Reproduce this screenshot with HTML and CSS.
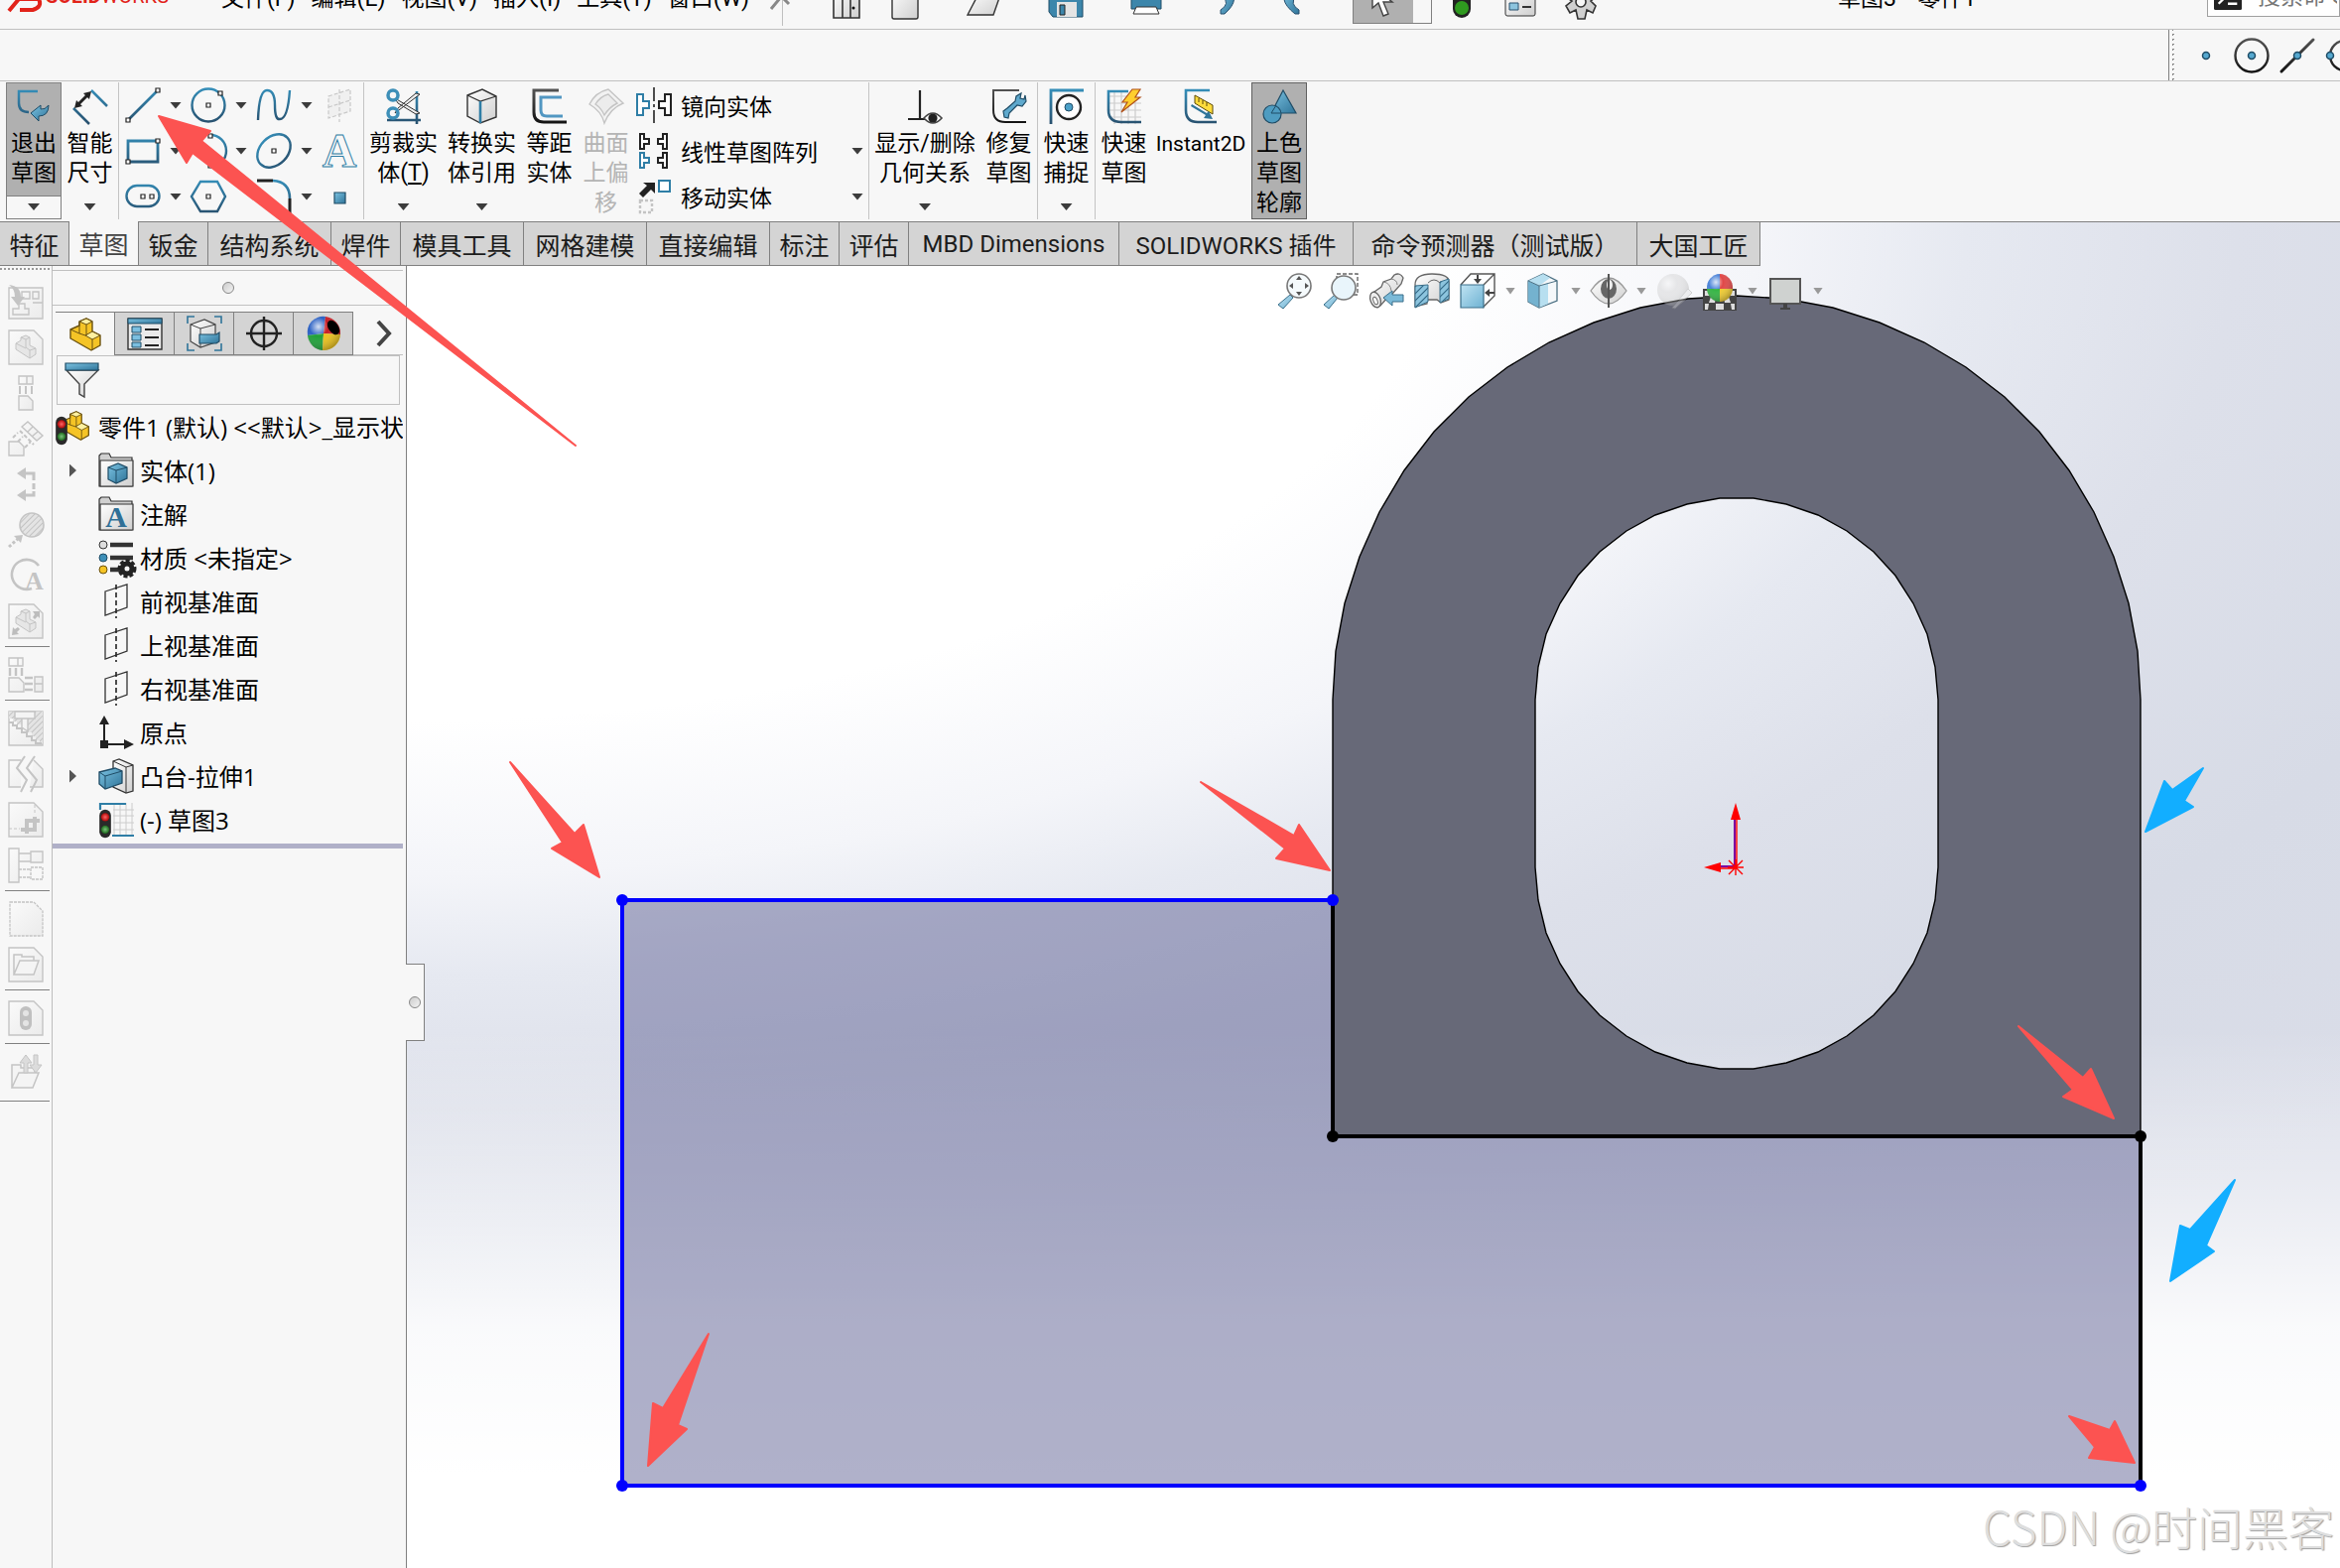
FILE: index.html
```
<!DOCTYPE html>
<html lang="zh-CN">
<head>
  <meta charset="UTF-8">
  <title>草图3 - 零件1</title>
  <link rel="stylesheet" href="styles.css">
</head>
<body>
  <!-- shared gradients and symbols -->
  <svg class="defs" aria-hidden="true">
    <defs>
      <linearGradient id="blue" gradientUnits="userSpaceOnUse" x1="0" y1="0" x2="0" y2="36"><stop offset="0" stop-color="#3590bb"/><stop offset="1" stop-color="#28506e"/></linearGradient>
      <linearGradient id="blueFill" x1="0" y1="0" x2="1" y2="1"><stop offset="0" stop-color="#7cc3e2"/><stop offset="1" stop-color="#2f7499"/></linearGradient>
      <linearGradient id="sky" x1="0" y1="0" x2="1" y2="1"><stop offset="0" stop-color="#bfe3f3"/><stop offset="1" stop-color="#6fb2d2"/></linearGradient>
      <linearGradient id="grey" x1="0" y1="0" x2="1" y2="1"><stop offset="0" stop-color="#ffffff"/><stop offset="1" stop-color="#cfcfcf"/></linearGradient>
      <linearGradient id="pale" x1="0" y1="0" x2="1" y2="1"><stop offset="0" stop-color="#fafafa"/><stop offset="1" stop-color="#ebebeb"/></linearGradient>
      <linearGradient id="dark" gradientUnits="userSpaceOnUse" x1="0" y1="0" x2="0" y2="36"><stop offset="0" stop-color="#555"/><stop offset="1" stop-color="#111"/></linearGradient>
      <radialGradient id="shine" cx=".35" cy=".3" r=".8"><stop offset="0" stop-color="#fff" stop-opacity=".8"/><stop offset=".35" stop-color="#fff" stop-opacity="0"/><stop offset="1" stop-color="#000" stop-opacity=".35"/></radialGradient>
      <radialGradient id="red"><stop offset="0" stop-color="#f66"/><stop offset="1" stop-color="#b00808"/></radialGradient>
      <radialGradient id="green"><stop offset="0" stop-color="#7cc27c"/><stop offset="1" stop-color="#1c6a1c"/></radialGradient>
      <pattern id="hatch" width="5" height="5" patternUnits="userSpaceOnUse" patternTransform="rotate(45)"><rect width="5" height="5" fill="#8cc4de"/><path d="M0 0v5" stroke="#2d6482" stroke-width="2"/></pattern>
      <pattern id="hatchGrey" width="4" height="4" patternUnits="userSpaceOnUse" patternTransform="rotate(45)"><rect width="4" height="4" fill="#e4e4e4"/><path d="M0 0v4" stroke="#c4c4c4" stroke-width="2"/></pattern>
    </defs>
    <symbol id="part" viewBox="0 0 36 36">
      <path d="M3 13l9-4V5l7-3 6 3v10l8 4v10l-9 5L3 22z" fill="#f5c426" stroke="#6b5210" stroke-width="1.4" stroke-linejoin="round"/>
      <path d="M12 5l7-3 6 3-6 3zM18 19l7-4 8 4-8 4z" fill="#fdf0a0" stroke="#6b5210"/>
      <path d="M19 8v11M25 23v11M3 13l9 4 6 2M12 5v12" fill="none" stroke="#6b5210"/>
    </symbol>
    <symbol id="partGrey" viewBox="0 0 36 36">
      <path d="M8 14l5-3V8l5-2 4 2v8l6 3v6l-6 4L8 20z" fill="#e6e6e6" stroke="#c4c4c4"/>
      <path d="M13 8l5 2 4-2M18 10v8l4 3v8M22 21l6-2M8 14l10 5" fill="none" stroke="#c4c4c4"/>
    </symbol>
    <symbol id="light" viewBox="0 0 14 36">
      <rect x="0" y="1" width="14" height="34" rx="7" fill="#2a2a2a"/>
      <circle cx="7" cy="10" r="5" fill="url(#red)"/><circle cx="7" cy="25" r="5" fill="url(#green)"/>
    </symbol>
    <symbol id="plane" viewBox="0 0 36 36">
      <path d="M7 8l22-7v23L7 32z" fill="none" stroke="#333" stroke-width="1.3"/>
      <path d="M18 1v34" stroke="#222" stroke-width="1.6" stroke-dasharray="5 3"/>
    </symbol>
    <symbol id="sheet" viewBox="0 0 36 36">
      <path d="M1 1h25l9 9v25H1z" fill="url(#pale)" stroke="#c4c4c4" stroke-width="1.4"/>
    </symbol>
    <symbol id="folder" viewBox="0 0 36 36">
      <path d="M1 34V3l2-2h8l2 4h21v29z" fill="#d0d0d0" stroke="#333" stroke-width="1.2"/>
      <path d="M2 8h33v26H2z" fill="url(#grey)" stroke="#333" stroke-width="1.2"/>
    </symbol>
  </svg>

  <header class="titlebar">
    <div class="titlebar-row">
      <div class="brand"><svg class="brand-mark" viewBox="0 0 36 36"><path d="M1 33l10-12h20q4 8-6 11H12" fill="none" stroke="#e2231a" stroke-width="4"/></svg><b>SOLID</b>WORKS</div>
      <nav class="menu">
        <button>文件(F)</button>
        <button>编辑(E)</button>
        <button>视图(V)</button>
        <button>插入(I)</button>
        <button>工具(T)</button>
        <button>窗口(W)</button>
        <button class="pin" aria-label="固定菜单"><svg viewBox="0 0 36 36"><path d="M6 31l10-12M12 14l12 12" stroke="#888" stroke-width="3"/></svg></button>
      </nav>
      <div class="quick">
        <button aria-label="欢迎"><svg viewBox="0 0 36 36"><path d="M5 2h26v32H5zM14 2v32M22 2v32" fill="url(#grey)" stroke="#333" stroke-width="1.6"/><circle cx="25" cy="24" r="1.5"/></svg></button>
        <button aria-label="新建"><svg viewBox="0 0 36 36"><rect x="5" y="1" width="26" height="34" rx="2" fill="url(#grey)" stroke="#333" stroke-width="1.4"/></svg></button>
        <button class="wide" aria-label="打开"><svg viewBox="0 0 36 36"><path d="M0 31L12 8h22L26 31z" fill="url(#grey)" stroke="#333" stroke-width="1.4"/></svg></button>
        <button class="wide" aria-label="保存"><svg viewBox="0 0 36 36"><path d="M1 2h34v31H5l-4-5z" fill="#3c86ab" stroke="#1f4c66"/><path d="M9 18h20v15H9z" fill="#e4e4e4"/><path d="M12 21h5v10h-5z" fill="#3c86ab" stroke="#222"/></svg></button>
        <button class="wide" aria-label="打印"><svg viewBox="0 0 36 36"><path d="M3 10h30v15H3z" fill="#3c86ab" stroke="#1f4c66"/><path d="M8 23h20l3 7H5z" fill="#fff" stroke="#333"/></svg></button>
        <button class="wide" aria-label="撤销"><svg viewBox="0 0 36 36"><path d="M18 4q16 10-2 26h-4v-4q10-6 2-14z" fill="url(#blueFill)" stroke="#28506e"/></svg></button>
        <button aria-label="重做"><svg viewBox="0 0 36 36"><path d="M16 4q-16 10 4 26h4v-4q-10-6-3-14z" fill="url(#blueFill)" stroke="#28506e"/></svg></button>
      </div>
      <button class="select-tool" aria-label="选择"><svg viewBox="0 0 36 36"><path d="M8 0v22l6-5 5 13 5-2-5-12h9z" fill="#fff" stroke="#444" stroke-width="1.4"/></svg></button>
      <div class="quick quick-end">
        <button aria-label="重建模型"><svg viewBox="0 0 36 36"><rect x="9" y="0" width="18" height="34" rx="9" fill="#222"/><circle cx="18" cy="24" r="7" fill="#2f9a1f"/></svg></button>
        <button aria-label="文件属性"><svg viewBox="0 0 36 36"><rect x="3" y="2" width="30" height="30" rx="2" fill="url(#grey)" stroke="#333"/><path d="M7 19h9v7H7z" fill="#8cc4de" stroke="#28506e"/><path d="M20 23h9" stroke="#333" stroke-width="2"/></svg></button>
        <button aria-label="选项"><svg viewBox="0 0 36 36"><path d="M14 2h8v7l6-3 5 7-5 4 5 5-3 7-6-3-2 9h-7l-2-9-6 3-4-7 6-5-6-4 5-7 6 3z" fill="#d0d0d0" stroke="#333" stroke-width="1.6"/><circle cx="18" cy="18" r="5" fill="#f7f7f7" stroke="#333" stroke-width="1.6"/></svg></button>
      </div>
      <div class="doc-title">草图3 * 零件1</div>
      <label class="search"><svg viewBox="0 0 36 36"><rect width="36" height="36" rx="2" fill="#222"/><path d="M6 16l6 6-6 6M18 20h12M18 28h12" fill="none" stroke="#fff" stroke-width="3"/></svg><input type="text" placeholder="搜索命令" aria-label="搜索命令"></label>
    </div>
  </header>

  <div class="snapbar">
    <div class="snaps">
      <button aria-label="点捕捉"><svg viewBox="0 0 36 36"><circle cx="18" cy="18" r="3.5" fill="#55a8cf" stroke="#1f4c66" stroke-width="1.5"/></svg></button>
      <button aria-label="圆心捕捉"><svg viewBox="0 0 36 36"><circle cx="18" cy="18" r="16.5" fill="none" stroke="url(#dark)" stroke-width="2.4"/><circle cx="18" cy="18" r="3.5" fill="#55a8cf" stroke="#1f4c66" stroke-width="1.5"/></svg></button>
      <button aria-label="中点捕捉"><svg viewBox="0 0 36 36"><path d="M2 34L34 2" stroke="url(#dark)" stroke-width="3" stroke-linecap="round"/><circle cx="18" cy="18" r="3.5" fill="#55a8cf" stroke="#1f4c66" stroke-width="1.5"/></svg></button>
      <button aria-label="象限点捕捉"><svg viewBox="0 0 36 36"><circle cx="20" cy="18" r="15" fill="none" stroke="url(#dark)" stroke-width="2.4"/><circle cx="5" cy="18" r="3.5" fill="#55a8cf" stroke="#1f4c66" stroke-width="1.5"/></svg></button>
    </div>
  </div>

  <section class="ribbon">
    <button class="tool tool-exit"><svg viewBox="0 0 36 36"><path d="M22 3H3v12q0 9 10 9" fill="none" stroke="url(#blue)" stroke-width="2.5"/><path d="M33 17q-4 5-8 4v-4l-10 8 8 8v-5q10 0 10-11z" fill="url(#blueFill)" stroke="#1f4c66"/></svg><span>退出<br>草图</span><i class="caret"></i></button>
    <button class="tool tool-md"><svg viewBox="0 0 36 36"><path d="M19 2l16 16M1 20l16 16" stroke="url(#blue)" stroke-width="2.5"/><path d="M5 17L16 6" stroke="#222" stroke-width="3"/><path d="M19 3l-2 8-6-6zM2 20l2-8 6 6z" fill="#222"/></svg><span>智能<br>尺寸</span><i class="caret"></i></button>

    <div class="sketch-grid">
      <div class="pair"><button aria-label="直线"><svg viewBox="0 0 36 36"><path d="M3 33L33 3" stroke="url(#blue)" stroke-width="2.6"/><path d="M1 31h4v4H1zM31 1h4v4h-4z" fill="#fff" stroke="#222" stroke-width="1.2"/></svg></button><i class="caret"></i></div>
      <div class="pair"><button aria-label="圆"><svg viewBox="0 0 36 36"><circle cx="18" cy="18" r="16.5" fill="none" stroke="url(#blue)" stroke-width="2.4"/><path d="M16 16h4v4h-4zM28 4h4v4h-4z" fill="#fff" stroke="#222" stroke-width="1.2"/></svg></button><i class="caret"></i></div>
      <div class="pair"><button aria-label="样条曲线"><svg viewBox="0 0 36 36"><path d="M2 33Q3 3 11 3t8 15 5 14Q32 32 34 3" fill="none" stroke="url(#blue)" stroke-width="2.4"/></svg></button><i class="caret"></i></div>
      <div class="pair"><button aria-label="草图平面"><svg viewBox="0 0 36 36"><path d="M7 9l22-7v22L7 31zM18 2v33M7 20l22-7" fill="#f0f0f0" stroke="#c8c8c8" stroke-width="1.2" stroke-dasharray="4 2"/></svg></button></div>

      <div class="pair"><button aria-label="矩形"><svg viewBox="0 0 36 36"><path d="M3 8h30v21H3z" fill="none" stroke="url(#blue)" stroke-width="2.8"/><path d="M31 6h4v4h-4zM1 27h4v4H1z" fill="#fff" stroke="#222" stroke-width="1.2"/></svg></button><i class="caret"></i></div>
      <div class="pair"><button aria-label="圆弧"><svg viewBox="0 0 36 36"><path d="M20 2a16 16 0 0 1 0 32" fill="none" stroke="url(#blue)" stroke-width="2.4"/><path d="M18 1h4v4h-4zM18 31h4v4h-4z" fill="#fff" stroke="#222" stroke-width="1.2"/></svg></button><i class="caret"></i></div>
      <div class="pair"><button aria-label="椭圆"><svg viewBox="0 0 36 36"><ellipse cx="18" cy="18" rx="19" ry="14" transform="rotate(-45 18 18)" fill="none" stroke="url(#blue)" stroke-width="2.4"/><path d="M16 16h4v4h-4z" fill="#fff" stroke="#222" stroke-width="1.2"/></svg></button><i class="caret"></i></div>
      <div class="pair"><button class="letter" aria-label="文字">A</button></div>

      <div class="pair"><button aria-label="槽口"><svg viewBox="0 0 36 36"><rect x="1.5" y="7" width="33" height="21" rx="10.5" fill="none" stroke="url(#blue)" stroke-width="2.4"/><path d="M16 16h4v4h-4zM25 16h4v4h-4z" fill="#fff" stroke="#222" stroke-width="1.2"/></svg></button><i class="caret"></i></div>
      <div class="pair"><button aria-label="多边形"><svg viewBox="0 0 36 36"><path d="M10 3h17l8 15-8 15H10L1 18z" fill="none" stroke="url(#blue)" stroke-width="2.4"/><path d="M16 16h4v4h-4z" fill="#fff" stroke="#222" stroke-width="1.2"/></svg></button></div>
      <div class="pair"><button aria-label="圆角"><svg viewBox="0 0 36 36"><path d="M1 2h16" stroke="#222" stroke-width="3"/><path d="M17 2q17 1 17 18" fill="none" stroke="url(#blue)" stroke-width="2.6"/><path d="M34 20v15" stroke="#222" stroke-width="3"/></svg></button><i class="caret"></i></div>
      <div class="pair"><button aria-label="点"><svg viewBox="0 0 36 36"><path d="M13 14h11v11H13z" fill="url(#blueFill)" stroke="#1f4c66" stroke-width="1.2"/></svg></button></div>
    </div>

    <button class="tool tool-lg"><svg viewBox="0 0 36 36"><path d="M31 3v33M1 32h34" stroke="url(#blue)" stroke-width="2.6"/><path d="M9 10l25 15-4 1L12 15zM9 25L34 6l-4-1L12 20z" fill="#eee" stroke="#333"/><circle cx="7" cy="7" r="5" fill="none" stroke="#3d8fb8" stroke-width="3.5"/><circle cx="7" cy="25" r="5" fill="none" stroke="#3d8fb8" stroke-width="3.5"/></svg><span>剪裁实<br>体(<u>T</u>)</span><i class="caret"></i></button>
    <button class="tool tool-lg"><svg viewBox="0 0 36 36"><path d="M3 7l15-6 14 7v21l-16 6L3 28z" fill="url(#grey)" stroke="#333" stroke-width="1.4"/><path d="M3 7l13 6 16-5" fill="none" stroke="#333" stroke-width="1.2"/><path d="M16 13v22" stroke="#2f7ea6" stroke-width="2.6"/></svg><span>转换实<br>体引用</span><i class="caret"></i></button>
    <button class="tool tool-md"><svg viewBox="0 0 36 36"><path d="M27 2H2v22q0 10 10 10h23" fill="none" stroke="url(#dark)" stroke-width="3"/><path d="M30 9H9v13q0 6 6 6h16" fill="none" stroke="#5297c2" stroke-width="3"/></svg><span>等距<br>实体</span></button>
    <button class="tool tool-md tool-off" disabled><svg viewBox="0 0 36 36"><path d="M1 16Q7 4 20 1l15 14q-13 5-19 20-3-12-15-19z" fill="#f2f2f2" stroke="#c4c4c4" stroke-width="1.4"/><path d="M7 16Q12 8 20 6l9 9q-8 4-13 12-3-7-9-11z" fill="#ececec" stroke="#c4c4c4" stroke-width="1.4"/></svg><span>曲面<br>上偏<br>移</span></button>

    <div class="tool-rows">
      <button class="tool-row"><svg viewBox="0 0 36 36"><path d="M18 0v36" stroke="#222" stroke-width="1.6" stroke-dasharray="14 3 3 3"/><path d="M1 7h6v7h6v7H7v7H1z" fill="#fff" stroke="#2f7ea6" stroke-width="2"/><path d="M35 7h-6v7h-6v7h6v7h6z" fill="#fff" stroke="#222" stroke-width="2"/></svg><span>镜向实体</span></button>
      <button class="tool-row"><svg viewBox="0 0 36 36"><path d="M4 1h4v5h5v5H8v5H4zM31 1h-4v5h-5v5h5v5h4zM31 20h-4v5h-5v5h5v5h4z" fill="#fff" stroke="#222" stroke-width="2"/><path d="M4 20h4v5h5v5H8v5H4z" fill="#fff" stroke="#2f7ea6" stroke-width="2"/></svg><span>线性草图阵列</span><i class="caret"></i></button>
      <button class="tool-row"><svg viewBox="0 0 36 36"><path d="M23 2h11v11H23z" fill="#fff" stroke="#2f7ea6" stroke-width="2"/><path d="M3 15l8-8-4-3h12v11l-4-4-8 8z" fill="#222"/><path d="M4 22h12v12H4z" fill="none" stroke="#c4c4c4" stroke-width="2.4" stroke-dasharray="3 2"/></svg><span>移动实体</span><i class="caret"></i></button>
    </div>

    <div class="group">
      <button class="tool tool-xl"><svg viewBox="0 0 36 36"><path d="M13 2v29M1 31h20" stroke="#222" stroke-width="2.2"/><path d="M17 30q9-10 18 0-9 10-18 0z" fill="#fff" stroke="#444" stroke-width="1.6"/><circle cx="26" cy="30" r="4.6" fill="#222"/></svg><span>显示/删除<br>几何关系</span><i class="caret"></i></button>
      <button class="tool tool-md"><svg viewBox="0 0 36 36"><path d="M28 2H2v20q0 12 12 12h21" fill="none" stroke="url(#dark)" stroke-width="2"/><path d="M13 29l-1-6 4-3 8-7 1-5 5-3-1 5 4 1 1-4 1 6-4 5-5-1-8 8-1 5z" fill="#5fa9cd" stroke="#1f4c66" stroke-width="1.2"/></svg><span>修复<br>草图</span></button>
    </div>
    <div class="group">
      <button class="tool tool-md"><svg viewBox="0 0 36 36"><path d="M2 36V2h33" fill="none" stroke="url(#blue)" stroke-width="2.8"/><circle cx="20" cy="19" r="12" fill="#fff" stroke="#222" stroke-width="2.4"/><circle cx="20" cy="19" r="4" fill="#4ba0c8" stroke="#1f4c66"/></svg><span>快速<br>捕捉</span><i class="caret"></i></button>
    </div>
    <div class="group">
      <button class="tool tool-md"><svg viewBox="0 0 36 36"><path d="M8 2v34M15 2v34M22 8v28M29 14v22M2 8h20M2 15h33M2 22h33M2 29h33" stroke="#ccc" stroke-width="1.2"/><path d="M22 3H2v19q0 12 13 12h20" fill="none" stroke="url(#blue)" stroke-width="2.6"/><path d="M26 1h8l-5 8h5L15 24l6-10h-5z" fill="#ffce2e" stroke="#b0501a" stroke-width="1.2"/></svg><span>快速<br>草图</span></button>
      <button class="tool tool-instant"><svg viewBox="0 0 36 36"><path d="M27 2H3v20q0 12 12 12h19" fill="none" stroke="url(#blue)" stroke-width="2.6"/><path d="M12 7l18 10v9L12 15z" fill="#ffdc3c" stroke="#5b4a08"/><path d="M16 10v4M20 12v4M24 14v4" stroke="#5b4a08"/><path d="M8 18l15 9-2 3 9 1-4-8-2 2L9 16z" fill="#2f7499"/></svg><span>Instant2D</span></button>
      <button class="tool tool-on"><svg viewBox="0 0 36 36"><path d="M22 2l13 23H10z" fill="url(#blueFill)" stroke="#1f4c66" stroke-width="1.2"/><circle cx="11" cy="26" r="9" fill="#4e9cc1" stroke="#1f4c66" stroke-width="1.2"/><path d="M15 17l-5 8h9" fill="none" stroke="#1f4c66"/></svg><span>上色<br>草图<br>轮廓</span></button>
    </div>
  </section>

  <main class="workspace">
    <!-- part face and open sketch -->
    <svg class="model" viewBox="0 224 2358 1356" preserveAspectRatio="xMinYMin meet">
      <path class="sketch-fill" d="M627 907H1343V1145H2157V1497H627z"/>
      <path class="face" fill-rule="evenodd" d="M1343 1145V705L1346 656L1355 608L1370 561L1390 516L1415 474L1445 435L1480 400L1519 370L1561 345L1606 325L1653 310L1701 301L1750 298L1799 301L1847 310L1894 325L1939 345L1981 370L2020 400L2055 435L2085 474L2110 516L2130 561L2145 608L2154 656L2157 705V1145z
        M1547 705L1550 672L1558 639L1572 608L1590 580L1612 556L1639 535L1668 519L1700 508L1733 502L1767 502L1800 508L1832 519L1861 535L1888 556L1910 580L1928 608L1942 639L1950 672L1953 705V874L1950 907L1942 940L1928 971L1910 999L1888 1023L1861 1044L1832 1060L1800 1071L1767 1077L1733 1077L1700 1071L1668 1060L1639 1044L1612 1023L1590 999L1572 971L1558 940L1550 907L1547 874z"/>
      <path class="edge-fixed" d="M1343 907V1145H2157V1497"/>
      <path class="edge-free" d="M1343 907H627V1497H2157"/>
      <g fill="#000"><circle cx="1343" cy="1145" r="6"/><circle cx="2157" cy="1145" r="6"/></g>
      <g fill="#00f"><circle cx="627" cy="907" r="6"/><circle cx="1343" cy="907" r="6"/><circle cx="627" cy="1497" r="6"/><circle cx="2157" cy="1497" r="6"/></g>
      <path d="M1748 874V826M1749 873H1734" stroke="#7a00a0" stroke-width="2"/>
      <path d="M1750 874V826M1749 875H1734M1741 874h16M1749 866v16M1742 867l14 14M1756 867l-14 14" stroke="#f00" stroke-width="1.4"/>
      <path d="M1749 809l5 17h-10zM1717 874l17-5v10z" fill="#f00"/>
    </svg>

    <nav class="tabs">
      <button class="tab">特征</button>
      <button class="tab active">草图</button>
      <button class="tab">钣金</button>
      <button class="tab tab-4">结构系统</button>
      <button class="tab">焊件</button>
      <button class="tab tab-4">模具工具</button>
      <button class="tab tab-4">网格建模</button>
      <button class="tab tab-4">直接编辑</button>
      <button class="tab">标注</button>
      <button class="tab">评估</button>
      <button class="tab tab-mbd">MBD Dimensions</button>
      <button class="tab tab-addin">SOLIDWORKS 插件</button>
      <button class="tab tab-predict">命令预测器（测试版）</button>
      <button class="tab tab-4">大国工匠</button>
    </nav>

    <div class="panels">
      <aside class="side-tools">
        <button aria-label="插入块"><svg viewBox="0 0 36 36"><path d="M1 4h34v31H1zM14 8h8v7h-8zM25 8h6v7h-6zM25 19h10v16M5 25h6v-5h6v5h4v6H5z" fill="url(#pale)" stroke="#c4c4c4" stroke-width="1.4"/><path d="M1 1q12 1 12 12h4l-7 9-7-9h4q0-8-6-12z" fill="#c4c4c4"/></svg></button>
        <button aria-label="标准三视图"><svg viewBox="0 0 36 36"><use href="#sheet"/><use href="#partGrey"/></svg></button>
        <button aria-label="投影视图"><svg viewBox="0 0 36 36"><path d="M11 1h14v8H11zM19 1v8M11 21h9l5 5v9H11z" fill="url(#pale)" stroke="#c4c4c4" stroke-width="1.4"/><path d="M12 11v8M18 11v8M24 11v8" stroke="#c4c4c4" stroke-width="2"/></svg></button>
        <button aria-label="辅助视图"><svg viewBox="0 0 36 36"><path d="M20 1l15 14-6 5L14 6zM25 6l-5 5M30 11l-6 5M1 21h10l5 5v9H1z" fill="url(#pale)" stroke="#c4c4c4" stroke-width="1.4"/><path d="M5 17l5-5M10 21l5-5M17 27l6-6M12 10l14 14" stroke="#c4c4c4" stroke-width="2" stroke-dasharray="4 2"/></svg></button>
        <button aria-label="剖面视图"><svg viewBox="0 0 36 36"><path d="M16 7h10v7M26 17v6M26 25v4H16" fill="none" stroke="#c4c4c4" stroke-width="3"/><path d="M9 7l9-6v12zM9 29l9-6v12z" fill="#c4c4c4"/></svg></button>
        <button aria-label="局部视图"><svg viewBox="0 0 36 36"><circle cx="24" cy="13" r="12" fill="url(#hatchGrey)" stroke="#c4c4c4" stroke-width="1.6"/><path d="M1 35l9-8" stroke="#c4c4c4" stroke-width="3" stroke-dasharray="3 2"/><path d="M6 24l9-1-2 8z" fill="#c4c4c4"/></svg></button>
        <button aria-label="注解视图"><svg viewBox="0 0 36 36"><path d="M31 8A15 15 0 1 0 24 31" fill="none" stroke="#c4c4c4" stroke-width="2.6"/><text x="17" y="32" class="glyph-a">A</text></svg></button>
        <button aria-label="相对视图"><svg viewBox="0 0 36 36"><use href="#sheet"/><use href="#partGrey"/><path d="M25 8h7v7l-2-2-3 3-2-2 2-3zM4 32l1-8 2 2 3-2 2 2-3 3 2 2z" fill="#bdbdbd"/></svg></button>
        <hr>
        <button aria-label="模型项目"><svg viewBox="0 0 36 36"><path d="M1 1h14v8H1zM10 1v8M1 21h10l5 5v9H1zM27 20h8v15h-8zM27 27h8" fill="url(#pale)" stroke="#c4c4c4" stroke-width="1.4"/><path d="M2 11v8M8 11v8M14 11v8M17 21h8M17 27h8M17 33h8" stroke="#c4c4c4" stroke-width="2.4"/></svg></button>
        <hr>
        <button aria-label="断开的剖视图"><svg viewBox="0 0 36 36"><path d="M1 1h34v34H1z" fill="url(#pale)" stroke="#c4c4c4" stroke-width="1.4"/><path d="M1 1h34v33h-3v-4h-4v-4h-4v-4h-5v-4h-5v-4H9v-3H5v-3H1z" fill="url(#hatchGrey)"/><path d="M1 12h4v3h4v3h5v4h5v4h5v4h4v3h6" fill="none" stroke="#c4c4c4" stroke-width="2"/><path d="M7 1h20v7H7zM14 8h6v13l-6-4z" fill="#f4f4f4" stroke="#c4c4c4" stroke-width="1.4"/></svg></button>
        <button aria-label="断裂视图"><svg viewBox="0 0 36 36"><path d="M13 4H1v27h12M26 4l9 9v18H22" fill="url(#pale)" stroke="#c4c4c4" stroke-width="1.4"/><path d="M17 0l-8 12 10 12-6 12M27 0l-8 12 10 12-6 12" fill="none" stroke="#c4c4c4" stroke-width="2"/></svg></button>
        <button aria-label="剪裁视图"><svg viewBox="0 0 36 36"><use href="#sheet"/><path d="M13 28h14V15M19 32V19h13" fill="none" stroke="#c4c4c4" stroke-width="4"/><path d="M1 27h11M27 3v9" stroke="#c4c4c4" stroke-dasharray="3 2"/></svg></button>
        <button aria-label="交替位置视图"><svg viewBox="0 0 36 36"><path d="M1 1h10v34H1zM11 6h12v8H11zM23 4h12v11H23z" fill="url(#pale)" stroke="#c4c4c4" stroke-width="1.4"/><path d="M11 22h12M11 30h12M23 20h12v12H23z" fill="none" stroke="#c4c4c4" stroke-width="1.4" stroke-dasharray="3 1"/></svg></button>
        <hr>
        <button aria-label="空白视图"><svg viewBox="0 0 36 36"><path d="M2 1h24l9 9v25H2z" fill="url(#pale)" stroke="#c4c4c4" stroke-width="1.3" stroke-dasharray="3 1"/></svg></button>
        <button aria-label="预定义视图"><svg viewBox="0 0 36 36"><use href="#sheet"/><path d="M6 28V8h8v2h12v4M6 28l6-14h19l-5 14z" fill="#f4f4f4" stroke="#c4c4c4" stroke-width="1.5"/></svg></button>
        <hr>
        <button aria-label="更新视图"><svg viewBox="0 0 36 36"><use href="#sheet"/><rect x="12" y="6" width="12" height="24" rx="6" fill="#c0c0c0"/><circle cx="18" cy="13" r="3" fill="#e4e4e4"/><circle cx="18" cy="23" r="3" fill="#e4e4e4"/></svg></button>
        <hr>
        <button aria-label="移动视图"><svg viewBox="0 0 36 36"><path d="M4 34V11h9v3h14v5M4 34l7-15h20l-6 15z" fill="#f4f4f4" stroke="#c4c4c4" stroke-width="1.5"/><path d="M16 19V9h-4l6-8 6 8h-4v10zM26 1h4v10h4l-6 8-6-8h4z" fill="#dcdcdc" stroke="#c4c4c4"/></svg></button>
        <hr class="hr-full">
      </aside>

      <aside class="feature-panel">
        <div class="grip"><span class="dot"></span></div>
        <div class="manager-tabs">
          <button class="active" aria-label="特征树"><svg viewBox="0 0 36 36"><use href="#part"/></svg></button>
          <button aria-label="属性"><svg viewBox="0 0 36 36"><path d="M1 3h34v31H1z" fill="#eaeaea" stroke="#333" stroke-width="1.4"/><path d="M1 3h34v5H1z" fill="url(#blueFill)" stroke="#1f4c66"/><path d="M5 11h9v6H5zM5 19h9v6H5zM5 27h9v5H5z" fill="#7cbfe0" stroke="#1f4c66"/><path d="M18 14h14M18 22h14M18 30h14" stroke="#222" stroke-width="2"/></svg></button>
          <button aria-label="配置"><svg viewBox="0 0 36 36"><path d="M1 8V1h7M28 1h7v7M35 28v7h-7M8 35H1v-7" fill="none" stroke="#2f7499" stroke-width="1.6"/><path d="M4 9l14-5 11 5v18L14 32 4 26z" fill="url(#grey)" stroke="#444" stroke-width="1.2"/><path d="M4 9l10 4 15-4M14 13v19" fill="none" stroke="#444"/><path d="M13 19h17l3-2v9l-3 2H13z" fill="url(#blueFill)" stroke="#1f4c66" stroke-width="1.2"/></svg></button>
          <button aria-label="尺寸专家"><svg viewBox="0 0 36 36"><circle cx="18" cy="18" r="13" fill="none" stroke="#222" stroke-width="2.4"/><path d="M18 1v34M0 18h36" stroke="#222" stroke-width="2.4"/></svg></button>
          <button aria-label="外观"><svg viewBox="0 0 36 36"><path d="M18 18L2 20A16 16 0 0 1 20 1z" fill="#2d62c4"/><path d="M18 18L20 1a17 17 0 0 1 15 18z" fill="#c81e26"/><path d="M18 18l-1 17A17 17 0 0 1 2 20z" fill="#1fa038"/><path d="M18 18l17 1a17 17 0 0 1-18 16z" fill="#ecc21a"/><circle cx="18" cy="18" r="17" fill="url(#shine)"/><ellipse cx="28" cy="12" rx="5" ry="8" transform="rotate(-35 28 12)" fill="#000"/></svg></button>
          <button class="more" aria-label="更多"><svg viewBox="0 0 36 36"><path d="M12 6l11 12-11 12" fill="none" stroke="#444" stroke-width="4"/></svg></button>
        </div>
        <label class="filter"><svg viewBox="0 0 36 36"><path d="M2 8l13 14v10l5 3V22L34 8z" fill="url(#grey)" stroke="#444" stroke-width="1.4"/><path d="M1 1h33v7H1z" fill="url(#blueFill)" stroke="#1f4c66" stroke-width="1.2"/></svg><input type="text" aria-label="过滤"></label>

        <ul class="tree">
          <li class="root"><svg viewBox="0 0 36 36"><use href="#part" x="5" y="-1" width="32" height="36"/><use href="#light" y="7" width="14" height="30"/></svg><span>零件1 (默认) &lt;&lt;默认&gt;_显示状态 1&gt;</span></li>
          <li class="expand"><svg viewBox="0 0 36 36"><use href="#folder"/><path d="M10 15l10-4 9 4v11l-11 5-8-4z" fill="url(#blueFill)" stroke="#1f4c66" stroke-width="1.2"/><path d="M10 15l8 3 11-3M18 18v13" fill="none" stroke="#1f4c66"/></svg><span>实体(1)</span></li>
          <li><svg viewBox="0 0 36 36"><use href="#folder"/><text x="18" y="31" class="glyph-note">A</text></svg><span>注解</span></li>
          <li><svg viewBox="0 0 36 36"><path d="M12 5h23M12 18h23M12 30h14" stroke="#333" stroke-width="4.5"/><circle cx="5" cy="5" r="4" fill="#ddd" stroke="#333"/><circle cx="5" cy="18" r="4" fill="#3d8fb8" stroke="#1f4c66"/><circle cx="5" cy="30" r="4" fill="#f5c426" stroke="#6b5210"/><circle cx="29" cy="29" r="5" fill="#f7f7f7" stroke="#222" stroke-width="5"/><circle cx="29" cy="29" r="8" fill="none" stroke="#222" stroke-width="3" stroke-dasharray="4 2"/></svg><span>材质 &lt;未指定&gt;</span></li>
          <li><svg viewBox="0 0 36 36"><use href="#plane"/></svg><span>前视基准面</span></li>
          <li><svg viewBox="0 0 36 36"><use href="#plane"/></svg><span>上视基准面</span></li>
          <li><svg viewBox="0 0 36 36"><use href="#plane"/></svg><span>右视基准面</span></li>
          <li><svg viewBox="0 0 36 36"><path d="M6 30V6M6 30h22" stroke="#222" stroke-width="2"/><path d="M6 1l5 9H1zM36 30l-10 5V25zM2 26h8v8H2z" fill="#222"/></svg><span>原点</span></li>
          <li class="expand"><svg viewBox="0 0 36 36"><path d="M15 3l6-2 14 6v26l-7 2-13-6z" fill="url(#grey)" stroke="#333" stroke-width="1.3"/><path d="M15 3l13 6 7-2M28 9v26" fill="none" stroke="#333"/><path d="M1 14l16-4 7 3v12L7 31l-6-5z" fill="url(#blueFill)" stroke="#1f4c66" stroke-width="1.3"/><path d="M1 14l6 4 17-5M7 18v13" fill="none" stroke="#1f4c66"/></svg><span>凸台-拉伸1</span></li>
          <li><svg viewBox="0 0 36 36"><path d="M15 8h21M15 14h21M15 21h21M15 28h21M16 3v30M22 3v30M28 1v32M34 1v32" stroke="#ccc"/><path d="M2 8V2h26M14 34h22" fill="none" stroke="#2f7ea6" stroke-width="2.2"/><use href="#light" y="7" width="14" height="30"/></svg><span>(-) 草图3</span></li>
        </ul>
        <button class="collapse" aria-label="折叠面板"><span class="dot"></span></button>
      </aside>
    </div>

    <div class="headsup">
      <button aria-label="整屏显示全图"><svg viewBox="0 0 36 36"><path d="M13 22l3 3-10 11-5-4z" fill="url(#sky)" stroke="#3a6f8a"/><circle cx="22" cy="13" r="12" fill="#f5fafc" stroke="#777" stroke-width="1.6"/><path d="M22 3l3 4h-6zM22 23l3-4h-6zM12 13l4-3v6zM32 13l-4-3v6z" fill="#555"/></svg></button>
      <button aria-label="局部放大"><svg viewBox="0 0 36 36"><path d="M14 1h21v21H14z" fill="none" stroke="#666" stroke-width="1.4" stroke-dasharray="4 2"/><path d="M12 22l3 3-9 11-5-4z" fill="url(#sky)" stroke="#3a6f8a"/><circle cx="21" cy="15" r="12" fill="#e9f5fb" stroke="#777" stroke-width="1.6"/></svg></button>
      <button aria-label="上一视图"><svg viewBox="0 0 36 36"><path d="M3 21L13 14l2-5 8-3 3-4q6-3 9 3l-2 6-8 9-6 5-7 8q-10 5-9-12z" fill="url(#grey)" stroke="#666" stroke-width="1.3"/><path d="M15 9q7 1 8 9M23 6q6 1 6 6" fill="none" stroke="#888"/><ellipse cx="7" cy="27" rx="5" ry="8" transform="rotate(-20 7 27)" fill="#eee" stroke="#666" stroke-width="1.3"/><ellipse cx="7" cy="28" rx="2" ry="4" transform="rotate(-20 7 28)" fill="#fff" stroke="#666"/><path d="M15 25l9-7v4h11v7H24v4z" fill="#7bbad8" stroke="#3a6f8a"/></svg></button>
      <button aria-label="剖面视图"><svg viewBox="0 0 36 36"><path d="M1 12Q1 1 18 1t17 8v18l-8 3-4-3H13v4L1 34z" fill="url(#grey)" stroke="#666" stroke-width="1.3"/><path d="M1 13l13-1v17L1 35zM26 9l9-3v20l-9 4z" fill="url(#hatch)" stroke="#3a6f8a"/><path d="M14 10q6-6 12 0" fill="none" stroke="#666"/></svg></button>
      <button aria-label="视图定向"><svg viewBox="0 0 36 36"><path d="M1 12L11 1h24v22L23 35M24 12L35 1" fill="none" stroke="#555" stroke-width="1.4"/><path d="M1 12h23v23H1z" fill="url(#sky)" stroke="#3a6f8a" stroke-width="1.2"/><path d="M18 2v5M35 20h-7" stroke="#444" stroke-width="2"/><path d="M18 11l-4-5h8zM25 20l5-4v8z" fill="#444"/></svg></button>
      <i class="caret"></i>
      <button aria-label="显示样式"><svg viewBox="0 0 36 36"><path d="M3 8l15-7 14 7v20L14 35 3 29z" fill="#f5f8fa" stroke="#4d7184" stroke-width="1.3"/><path d="M3 8l11 5v22L3 29z" fill="#74b2cf"/><path d="M3 8L18 1l7 4-11 8zM14 13l9-3v21l-9 4z" fill="#b7dff0"/><path d="M3 8l11 5 18-5M14 13v22" fill="none" stroke="#4d7184"/></svg></button>
      <i class="caret"></i>
      <button aria-label="隐藏/显示项目"><svg viewBox="0 0 36 36"><path d="M0 18Q18-8 36 18 18 44 0 18z" fill="url(#grey)" stroke="#999" stroke-width="1.3"/><ellipse cx="18" cy="16" rx="8" ry="10" fill="#666"/><ellipse cx="19" cy="12" rx="3" ry="5" fill="#eee"/><path d="M18 1v34" stroke="#555" stroke-width="2"/></svg></button>
      <i class="caret"></i>
      <button class="faded" aria-label="编辑外观"><svg viewBox="0 0 36 36"><circle cx="17" cy="17" r="16" fill="#ccc"/><circle cx="17" cy="17" r="16" fill="url(#shine)"/><path d="M32 16l4 4-17 16-3-1z" fill="#ddd" stroke="#999"/></svg></button>
      <button aria-label="应用布景"><svg viewBox="0 0 36 36"><path d="M1 16h34v22H1z" fill="#444"/><path d="M3 18h6v5H3zM27 18h6v5h-6zM14 31h8v6h-8zM9 24h5l-1 6H7zM22 24h5l2 6h-6zM3 31h4l-1 6H3zM29 31h4v6h-3z" fill="#ddd"/><path d="M18 16V1A13 14 0 0 0 5 16z" fill="#4a83d8"/><path d="M18 1a13 14 0 0 1 13 15H18z" fill="#e04848"/><path d="M5 16h13v13A13 14 0 0 1 5 16z" fill="#35b544"/><path d="M31 16H18v13a13 14 0 0 0 13-13z" fill="#f0cc30"/><ellipse cx="18" cy="15" rx="13" ry="14" fill="url(#shine)"/></svg></button>
      <i class="caret"></i>
      <button aria-label="视图设置"><svg viewBox="0 0 36 36"><path d="M3 6h30v25H3z" fill="#cfd2d0" stroke="#555" stroke-width="2"/><path d="M16 31h4v4h3v2H13v-2h3z" fill="#444"/></svg></button>
      <i class="caret"></i>
    </div>
  </main>

  <!-- callout arrows -->
  <svg class="callouts" viewBox="0 0 2358 1580" preserveAspectRatio="xMinYMin meet">
    <g fill="#fc5351" stroke="#fc5351" stroke-width="2" stroke-linejoin="round">
      <path d="M580 449L203 142L212 132L160 117L188 164L194 154z"/>
      <path d="M514 768L579 840L588 831L604 884L556 855L567 849z"/>
      <path d="M1210 788L1304 842L1309 831L1340 877L1286 865L1295 855z"/>
      <path d="M2034 1034L2099 1086L2107 1077L2130 1127L2079 1105L2089 1098z"/>
      <path d="M714 1344L683 1436L692 1440L653 1477L658 1414L668 1419z"/>
      <path d="M2085 1427L2126 1441L2131 1432L2151 1474L2105 1469L2111 1458z"/>
    </g>
    <g fill="#12aeff" stroke="#12aeff" stroke-width="2" stroke-linejoin="round">
      <path d="M2220 774L2201 807L2210 813L2162 838L2181 787L2189 796z"/>
      <path d="M2252 1189L2223 1255L2231 1261L2187 1291L2197 1235L2207 1239z"/>
    </g>
  </svg>
  <div class="watermark">CSDN @时间黑客</div>
</body>
</html>
```
FILE: styles.css
```
* {
  box-sizing: border-box;
}

body {
  margin: 0;
  position: relative;
  min-height: 100vh;
  display: flex;
  flex-direction: column;
  overflow: hidden;
  background: #f7f7f7;
  color: #000;
  font-family: Roboto, "Noto Sans CJK SC", sans-serif;
  font-size: 23px;
}

button {
  margin: 0;
  padding: 0;
  border: none;
  background: none;
  font: inherit;
  color: inherit;
}

input {
  border: none;
  background: none;
  font: inherit;
  outline: none;
  min-width: 0;
}

svg {
  width: 36px;
  height: 36px;
  flex-shrink: 0;
  display: block;
  overflow: visible;
}

.defs {
  position: absolute;
  width: 0;
  height: 0;
}

.caret {
  width: 12px;
  height: 7px;
  background: #3c3c3c;
  clip-path: polygon(0 0, 100% 0, 50% 100%);
}

/* title bar: its upper half is scrolled off the window */
.titlebar {
  height: 30px;
  overflow: hidden;
  border-bottom: 1px solid #c0c0c0;
}

.titlebar-row {
  height: 60px;
  margin-top: -34px;
  display: flex;
  align-items: center;
  white-space: nowrap;
}

.brand {
  width: 215px;
  flex-shrink: 0;
  padding-left: 8px;
  display: flex;
  align-items: center;
  color: #e2231a;
  font-size: 20px;
}

.brand-mark {
  margin-right: 2px;
}

.menu {
  width: 574px;
  flex-shrink: 0;
  height: 60px;
  padding-left: 8px;
  display: flex;
  align-items: center;
  gap: 16px;
  border-right: 1px solid #c0c0c0;
}

.quick {
  display: flex;
  flex-shrink: 0;
  padding: 12px 0 0 46px;
  gap: 23px;
}

.quick .wide {
  padding-left: 22px;
}

.quick button:last-child {
  padding-left: 8px;
}

.select-tool {
  width: 80px;
  height: 56px;
  flex-shrink: 0;
  padding: 16px 11px 0;
  margin-left: 42px;
  border: 1px solid #808080;
  background: linear-gradient(to right, #b0b0b0 60px, #f7f7f7 60px);
}

.quick-end {
  width: 409px;
  padding-left: 12px;
}

.quick-end button:last-child {
  padding-left: 2px;
}

.doc-title {
  width: 372px;
  flex-shrink: 0;
}

.search {
  flex: 1;
  height: 42px;
  display: flex;
  align-items: center;
  gap: 14px;
  padding-left: 6px;
  border: 1px solid #a0a0a0;
  background: #fff;
  overflow: hidden;
}

.search svg {
  width: 28px;
  height: 28px;
}

.search input {
  width: 110px;
  color: #555;
}

.snapbar {
  height: 52px;
  display: flex;
  justify-content: flex-end;
  border-bottom: 1px solid #c0c0c0;
}

.snaps {
  width: 173px;
  display: flex;
  align-items: center;
  gap: 10px;
  border-left: 1px solid #808080;
  padding-left: 19px;
  background: radial-gradient(circle, #888 1px, transparent 1px) 1px 2px / 5px 5px repeat-y;
}

/* command ribbon */
.ribbon {
  height: 141px;
  padding: 1px 0 2px 6px;
  display: flex;
}

.tool {
  display: flex;
  flex-direction: column;
  align-items: center;
  padding: 6px 0 9px;
  line-height: 30px;
  white-space: nowrap;
}

.tool span {
  margin-top: 5px;
}

.tool .caret {
  margin-top: auto;
}

.tool-md {
  width: 57px;
}

.tool-lg {
  width: 79px;
}

.tool-xl {
  width: 112px;
}

.tool-instant {
  width: 98px;
  font-size: 21px;
}

.tool-exit,
.tool-on {
  width: 56px;
  border: 1px solid #808080;
  padding: 5px 0 8px;
}

.tool-exit {
  background: linear-gradient(#b0b0b0 113px, #808080 113px, #808080 114px, #f7f7f7 114px);
}

.tool-on {
  margin-left: 2px;
  padding-bottom: 0;
  background: #b0b0b0;
  border-color: #606060;
}

.tool-off {
  padding-bottom: 0;
  color: #b4b4b4;
}

.sketch-grid {
  display: grid;
  grid-template-columns: repeat(3, 66px) 36px;
  grid-template-rows: repeat(3, 46px);
  padding: 0 6px;
  border: solid #c4c4c4;
  border-width: 0 1px;
}

.pair {
  display: flex;
  align-items: center;
  gap: 9px;
}

.letter {
  width: 36px;
  font-family: "Liberation Serif", serif;
  font-weight: bold;
  font-size: 48px;
  line-height: 46px;
  color: #f7f7f7;
  -webkit-text-stroke: 1px #2f7ea6;
}

.tool-rows {
  width: 236px;
  padding: 0 5px 0 2px;
  display: flex;
  flex-direction: column;
}

.tool-row {
  height: 46px;
  display: flex;
  align-items: center;
  gap: 9px;
}

.tool-row .caret {
  margin-left: auto;
}

.group {
  display: flex;
  border-left: 1px solid #c4c4c4;
}

/* workspace */
.workspace {
  flex: 1;
  position: relative;
  display: flex;
  flex-direction: column;
  border-top: 1px solid #808080;
  background:
    linear-gradient(to bottom, rgba(255, 255, 255, 0) 60%, rgba(255, 255, 255, 0.35) 70%, rgba(255, 255, 255, 0.85) 82%, #fff 93%),
    radial-gradient(ellipse 68% 57% at 410px 0, #fff 65%, #f4f5f9 85%, #e6e9f1 98%, #dde0ea 115%, #d7dbe6 140%, #dadde8 170%);
}

.model {
  position: absolute;
  left: 0;
  top: 0;
  width: 100%;
  height: auto;
}

.sketch-fill {
  fill: rgb(80, 82, 138);
  fill-opacity: 0.45;
}

.face {
  fill: #676978;
  stroke: #000;
  stroke-width: 1.4;
}

.edge-fixed,
.edge-free {
  fill: none;
  stroke: #000;
  stroke-width: 4;
}

.edge-free {
  stroke: #00f;
}

.tabs {
  position: relative;
  height: 44px;
  display: flex;
  align-items: stretch;
}

.tab {
  min-width: 70px;
  border-right: 1px solid #808080;
  border-bottom: 1px solid #808080;
  background: #d4d4d4;
  color: #1c1c1c;
  font-size: 25px;
  white-space: nowrap;
}

.tab.active {
  margin-top: -1px;
  background: #f7f7f7;
  color: #444;
}

.tab-4 {
  min-width: 124px;
}

.tab-mbd {
  min-width: 212px;
  font-size: 24px;
}

.tab-addin {
  min-width: 236px;
  font-size: 24px;
}

.tab-predict {
  min-width: 286px;
}

.panels {
  flex: 1;
  position: relative;
  display: flex;
  width: 410px;
  background: #f7f7f7;
}

.side-tools {
  width: 53px;
  border-right: 1px solid #bdbdbd;
  padding-top: 13px;
  background: radial-gradient(circle, #999 1px, transparent 1px) 3px 1px / 4px 4px repeat-x;
}

.side-tools button {
  display: flex;
  align-items: center;
  width: 52px;
  height: 46px;
  padding-left: 8px;
}

.side-tools hr {
  width: 45px;
  height: 1px;
  margin: 2px 2px 5px 5px;
  border: none;
  background: #808080;
}

.side-tools .hr-full {
  width: 50px;
  margin: 6px 0 0;
}

.glyph-a,
.glyph-note {
  font-family: "Liberation Serif", serif;
  font-weight: bold;
  font-size: 26px;
  fill: #c4c4c4;
}

.glyph-note {
  font-size: 30px;
  text-anchor: middle;
  fill: #2f6f96;
}

.feature-panel {
  flex: 1;
  min-width: 0;
  position: relative;
  border-right: 1px solid #808080;
}

.grip {
  height: 36px;
  margin: 4px 3px 0 0;
  border: solid #c0c0c0;
  border-width: 1px 0;
  display: flex;
  align-items: center;
  justify-content: center;
}

.dot {
  width: 12px;
  height: 12px;
  border: 1px solid #888;
  border-radius: 50%;
  background: linear-gradient(135deg, #ccc, #f4f4f4);
}

.manager-tabs {
  display: flex;
  height: 44px;
  margin: 6px 3px 0 3px;
}

.manager-tabs button {
  width: 60px;
  display: flex;
  align-items: center;
  justify-content: center;
  border: 1px solid #808080;
  border-left: none;
  background: #d4d4d4;
}

.manager-tabs .active {
  background: none;
  border-bottom: none;
}

.manager-tabs .more {
  flex: 1;
  border: none;
  border-bottom: 1px solid #c0c0c0;
  background: none;
  padding-left: 12px;
}

.filter {
  display: flex;
  align-items: center;
  height: 50px;
  margin: 0 6px 0 4px;
  padding-left: 7px;
  border: 1px solid #c0c0c0;
}

.filter input {
  flex: 1;
}

.tree {
  margin: 0 3px 0 0;
  padding: 0 0 2px;
  list-style: none;
  overflow: hidden;
  border-bottom: 5px solid #b0b0c8;
  font-family: "Open Sans", "Noto Sans CJK SC", sans-serif;
  font-size: 24px;
}

.tree li {
  display: flex;
  align-items: center;
  gap: 6px;
  height: 44px;
  padding-left: 46px;
  white-space: nowrap;
}

.tree span {
  padding-bottom: 2px;
}

.tree .root {
  gap: 8px;
  padding-left: 2px;
}

.tree .expand {
  padding-left: 17px;
}

.tree .expand::before {
  content: "";
  width: 7px;
  height: 13px;
  margin-right: 16px;
  background: #555;
  clip-path: polygon(0 0, 100% 50%, 0 100%);
}

.collapse {
  position: absolute;
  left: 100%;
  top: 703px;
  width: 19px;
  height: 78px;
  display: flex;
  align-items: center;
  justify-content: center;
  border: 1px solid #808080;
  border-left: none;
  background: #f7f7f7;
}

/* view toolbar floats over the drawing */
.headsup {
  position: absolute;
  left: 1287px;
  top: 51px;
  display: flex;
  align-items: center;
  gap: 10px;
}

.headsup .caret {
  width: 10px;
  background: #999;
}

.faded {
  opacity: 0.4;
}

.callouts {
  position: absolute;
  left: 0;
  top: 0;
  width: 100%;
  height: auto;
  pointer-events: none;
}

.watermark {
  position: absolute;
  right: 6px;
  bottom: 10px;
  font-family: "Noto Sans CJK SC", sans-serif;
  font-weight: 300;
  font-size: 46px;
  line-height: 66px;
  color: #dedede;
  text-shadow: 1px 1px 1px #a0a0a0;
}
```
